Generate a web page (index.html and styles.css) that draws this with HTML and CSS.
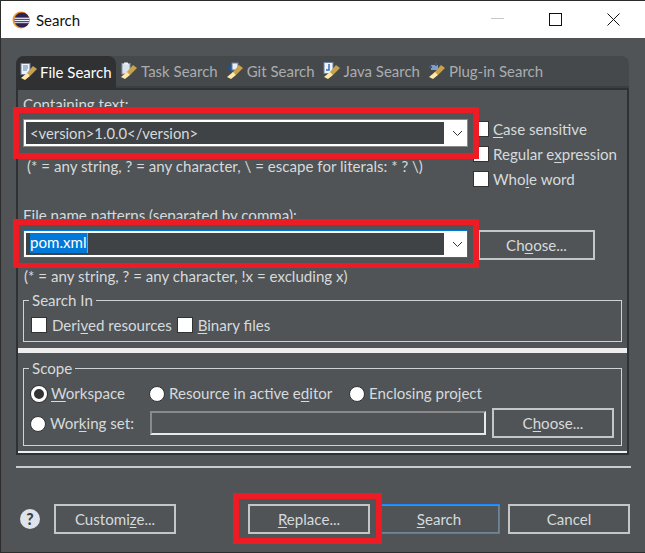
FILE: index.html
```html
<!DOCTYPE html>
<html lang="en">
<head>
<meta charset="utf-8">
<title>Search</title>
<link rel="stylesheet" href="styles.css">
</head>
<body>
<div class="window">
  <header class="titlebar">
    <svg class="app-icon" width="18" height="18" viewBox="0 0 18 18">
      <circle cx="9" cy="9" r="8.5" fill="#f7941e"/>
      <circle cx="10" cy="9" r="7.6" fill="#2c2255"/>
      <rect x="2.5" y="6.6" width="15" height="1.4" fill="#d8d6e8"/>
      <rect x="2.5" y="8.8" width="15" height="1.4" fill="#f2f1f8"/>
      <rect x="2.5" y="11" width="15" height="1.2" fill="#c9c6de"/>
    </svg>
    <span class="title">Search</span>
    <div class="controls">
      <svg width="13" height="13" viewBox="0 0 13 13"><path d="M0 5.5h13" stroke="#c8c8c8"/></svg>
      <svg width="13" height="13" viewBox="0 0 13 13"><rect x="0.5" y="0.5" width="12" height="12" fill="none" stroke="#111"/></svg>
      <svg width="13" height="13" viewBox="0 0 13 13"><path d="M0.5 0.5l12 12M12.5 0.5l-12 12" stroke="#111" fill="none"/></svg>
    </div>
  </header>

  <main class="content">
    <div class="tabfolder">
      <nav class="tabs">
        <div class="tab active">
          <svg class="tab-icon" width="18" height="18" viewBox="0 0 18 18"><rect x="1" y="0.5" width="9" height="11" fill="#eef3fa" stroke="#6d7f99"/><path d="M3 3h5M3 5h5M3 7h4" stroke="#5b7fb5"/><path d="M6 11l7-8 4 3-7 7z" fill="#c9a24d"/><path d="M1 15l6-5 3 3-5 4z" fill="#ffe9a6"/></svg>
          <span>File Search</span>
        </div>
        <div class="tab">
          <svg class="tab-icon" width="18" height="18" viewBox="0 0 18 18"><rect x="2" y="1.5" width="8" height="10.5" fill="#d9e2ee" stroke="#8a97a8"/><rect x="4" y="0.5" width="4" height="2" fill="#eef1f5"/><path d="M6 11l7-8 4 3-7 7z" fill="#c9a24d"/><path d="M1 15l6-5 3 3-5 4z" fill="#ffe9a6"/></svg>
          <span>Task Search</span>
        </div>
        <div class="tab">
          <svg class="tab-icon" width="18" height="18" viewBox="0 0 18 18"><path d="M1 6l5-5 5 5-5 5z" fill="#24528f"/><rect x="6" y="1" width="6" height="7" fill="#e8eef6" stroke="#6d7f99"/><path d="M6 11l7-8 4 3-7 7z" fill="#c9a24d"/><path d="M1 15l6-5 3 3-5 4z" fill="#ffe9a6"/></svg>
          <span>Git Search</span>
        </div>
        <div class="tab">
          <svg class="tab-icon" width="18" height="18" viewBox="0 0 18 18"><rect x="1" y="0.5" width="9" height="11" fill="#eef3fa" stroke="#6d7f99"/><path d="M6 2v6H3" stroke="#2f6fc0" fill="none" stroke-width="1.5"/><path d="M6 11l7-8 4 3-7 7z" fill="#c9a24d"/><path d="M1 15l6-5 3 3-5 4z" fill="#ffe9a6"/></svg>
          <span>Java Search</span>
        </div>
        <div class="tab">
          <svg class="tab-icon" width="18" height="18" viewBox="0 0 18 18"><path d="M3 3h7v5H3z" fill="#7f9fc9"/><path d="M1 5h3M8 1v3" stroke="#345c94" stroke-width="2"/><path d="M6 11l7-8 4 3-7 7z" fill="#c9a24d"/><path d="M1 15l6-5 3 3-5 4z" fill="#ffe9a6"/></svg>
          <span>Plug-in Search</span>
        </div>
      </nav>

      <section class="panel">
        <div class="top">
          <div class="top-left">
            <label class="label">Containing text:</label>
            <div class="combo">
              <div class="field field-text">&lt;version&gt;1.0.0&lt;/version&gt;</div>
              <svg class="chevron" width="11" height="7" viewBox="0 0 11 7"><path d="M1 1l4.5 4.5L10 1" fill="none" stroke="#333"/></svg>
            </div>
            <p class="hint hint-first">(* = any string, ? = any character, \ = escape for literals: * ? \)</p>
          </div>
          <div class="options">
            <div class="check"><i class="box"></i><span><u>C</u>ase sensitive</span></div>
            <div class="check"><i class="box"></i><span>Regular e<u>x</u>pression</span></div>
            <div class="check"><i class="box"></i><span>Who<u>l</u>e word</span></div>
          </div>
        </div>

        <label class="label label-files">File name patterns (separated by comma):</label>
        <div class="files-row">
          <div class="combo focused">
            <div class="field"><span class="selected">pom.xml</span></div>
            <svg class="chevron" width="11" height="7" viewBox="0 0 11 7"><path d="M1 1l4.5 4.5L10 1" fill="none" stroke="#333"/></svg>
          </div>
          <button class="btn btn-choose">Ch<u>o</u>ose...</button>
        </div>
        <p class="hint hint-second">(* = any string, ? = any character, !x = excluding x)</p>

        <fieldset class="group group-in">
          <legend>Search In</legend>
          <div class="check"><i class="box"></i><span>Deri<u>v</u>ed resources</span></div>
          <div class="check"><i class="box"></i><span><u>B</u>inary files</span></div>
        </fieldset>

        <div class="sash"></div>

        <fieldset class="group group-scope">
          <legend>Scope</legend>
          <div class="scope-row">
            <div class="radio radio-ws"><i class="dot checked"></i><span><u>W</u>orkspace</span></div>
            <div class="radio radio-res"><i class="dot"></i><span>Resource in active e<u>d</u>itor</span></div>
            <div class="radio"><i class="dot"></i><span>Enclosing pro<u>j</u>ect</span></div>
          </div>
          <div class="scope-row scope-set">
            <div class="radio radio-ws"><i class="dot"></i><span>Wor<u>k</u>ing set:</span></div>
            <div class="set-input"></div>
            <button class="btn btn-set">C<u>h</u>oose...</button>
          </div>
        </fieldset>
      </section>
    </div>

    <div class="rule"></div>

    <footer class="actions">
      <span class="help">?</span>
      <button class="btn">Customi<u>z</u>e...</button>
      <button class="btn btn-replace"><u>R</u>eplace...</button>
      <button class="btn btn-default"><u>S</u>earch</button>
      <button class="btn">Cancel</button>
    </footer>
  </main>

  <div class="mark mark-text"></div>
  <div class="mark mark-files"></div>
  <div class="mark mark-replace"></div>
</div>
</body>
</html>
```
FILE: styles.css
```css
* { box-sizing: border-box; }
html, body { margin: 0; padding: 0; }
body {
  width: 645px;
  height: 553px;
  overflow: hidden;
  font-family: "Lato", "Open Sans", sans-serif;
  font-size: 15.1px;
  color: #d6dadc;
}
.window {
  position: relative;
  width: 645px;
  height: 553px;
  background: #505456;
  border-top: 1px solid #2d2d2d;
  border-left: 1px solid #2d2d2d;
  border-bottom: 1px solid #2d2d2d;
  display: flex;
  flex-direction: column;
}
.titlebar {
  height: 37px;
  flex: none;
  background: #fff;
  display: flex;
  align-items: center;
  padding-left: 11px;
  color: #111;
}
.title { margin-left: 6px; font-size: 15px; }
.controls {
  margin-left: auto;
  display: flex;
  align-items: center;
  gap: 45px;
  padding-right: 25px;
}
.content { flex: 1; padding: 18px 0 0 15px; }
.tabfolder { width: 613px; }
.tabs {
  height: 32px;
  display: flex;
  background: #46494b;
  border-radius: 8px 8px 0 0;
  border-bottom: 2px solid #3c3f41;
  font-size: 15px;
}
.tab {
  display: flex;
  align-items: center;
  gap: 3px;
  padding: 0 2px 0 4px;
  color: #a9adb0;
  white-space: nowrap;
}
.tab span { margin-right: 2px; }
.tab.active {
  width: 100px;
  gap: 2px;
  margin-bottom: -2px;
  background: #2f3133;
  color: #fff;
  border-radius: 8px 8px 0 0;
}
.panel {
  height: 365px;
  border: 2px solid #2f3133;
  border-bottom: 0;
  box-shadow: inset 0 -2px 0 #f0f0f0, 0 2px 0 #2f3133;
  padding: 0 0 0 5px;
}
.top { display: flex; }
.top-left { width: 445px; flex: none; }
.label { display: block; line-height: 16px; }
.top-left .label { margin-top: 6px; }
.combo {
  width: 445px;
  height: 28px;
  background: #fff;
  border: 1px solid #8a8a8a;
  display: flex;
  align-items: center;
  padding: 2px;
  margin-top: 7px;
}
.field {
  width: 418px;
  height: 22px;
  background: #3f4346;
  color: #d6dadc;
  line-height: 22px;
  padding-left: 4px;
  white-space: nowrap;
}
.field-text { font-size: 14.8px; }
.chevron { margin-left: 8px; }
.hint { margin: 0; line-height: 18px; white-space: nowrap; }
.hint-first { margin: 10px 0 0 4px; }
.options {
  margin-left: 5px;
  padding-top: 31px;
  display: flex;
  flex-direction: column;
  gap: 9px;
}
.check { display: flex; align-items: center; height: 16px; white-space: nowrap; }
.box {
  width: 16px;
  height: 16px;
  flex: none;
  background: #fff;
  border: 1px solid #333;
  margin-right: 4px;
}
.label-files { margin-top: 20px; }
.files-row { display: flex; align-items: flex-start; margin-top: 7px; }
.files-row .combo { margin-top: 0; }
.focused { border-color: #0078d7; }
.selected {
  display: inline-block;
  height: 20px;
  line-height: 19px;
  background: #0078d7;
  color: #fff;
  margin-left: 0;
  border-right: 1px solid #f08020;
  vertical-align: top;
}
.btn {
  width: 122px;
  height: 30px;
  padding: 0;
  background: transparent;
  border: 2px solid #c4c6c7;
  color: #d6dadc;
  font: inherit;
}
.btn-choose { width: 117px; margin-left: 10px; }
.hint-second { margin: 7px 0 0 1px; }
fieldset.group {
  margin: 0;
  padding: 0;
  width: 599px;
  border: 1px solid #d0d2d3;
}
.group legend {
  margin-left: 5px;
  padding: 0 3px;
  line-height: 18px;
}
.group-in {
  height: 51px;
  margin-top: 6px !important;
}
.group-in .check { display: inline-flex; margin: 8px 0 0 7px; }
.group-in .box { margin-right: 5px; }
.group-in .check + .check { margin-left: 1px; }
.sash { width: 609px; height: 5px; margin: 6px 0 0 -5px; background: #eeeeee; }
.group-scope { height: 87px; margin-top: 6px !important; }
.scope-row { display: flex; align-items: center; }
.radio { display: flex; align-items: center; white-space: nowrap; }
.radio span { position: relative; top: -1px; }
.dot {
  width: 16px;
  height: 16px;
  flex: none;
  border-radius: 50%;
  background: #fff;
  margin-right: 4px;
  border: 1px solid #333;
}
.radio-ws .dot { margin-right: 4px; }
.dot.checked { background: #333; border: 3px solid #fff; box-shadow: 0 0 0 1px #333; }
.scope-row:first-of-type { margin-top: 8px; padding-left: 7px; }
.radio-ws { width: 118px; }
.radio-res { width: 200px; }
.scope-set { padding-left: 6px; margin-top: 5px; }
.scope-set .radio-ws { padding-top: 2px; }
.set-input {
  width: 336px;
  height: 24px;
  margin-left: 2px;
  border: 2px solid #e8e8e8;
  border-top-color: #8a8a8a;
  border-left-color: #8a8a8a;
}
.btn-set { width: 122px; margin-left: 6px; }
.rule { width: 615px; height: 2px; margin-top: 13px; background: #c8cacb; }
.actions { display: flex; align-items: center; padding: 36px 0 0 4px; }
.help {
  width: 20px;
  height: 20px;
  flex: none;
  border-radius: 50%;
  background: #dfe4ec;
  color: #3f4346;
  font-weight: 900;
  font-size: 16px;
  line-height: 20px;
  text-align: center;
  margin-right: 14px;
}
.btn-replace { margin-left: 72px; }
.btn-default { margin-left: 8px; border: 1px solid #1a8cff; box-shadow: inset 0 0 0 1px #6f8696; }
.btn-default + .btn { margin-left: 8px; }
u { text-underline-offset: 2px; }
.mark { position: absolute; border: 6px solid #ed1c24; pointer-events: none; }
.mark-text { left: 12px; top: 106px; width: 466px; height: 52px; }
.mark-files { left: 12px; top: 218px; width: 466px; height: 49px; border-width: 6px 6px 5px; }
.mark-replace { left: 232px; top: 492px; width: 149px; height: 51px; }
```
